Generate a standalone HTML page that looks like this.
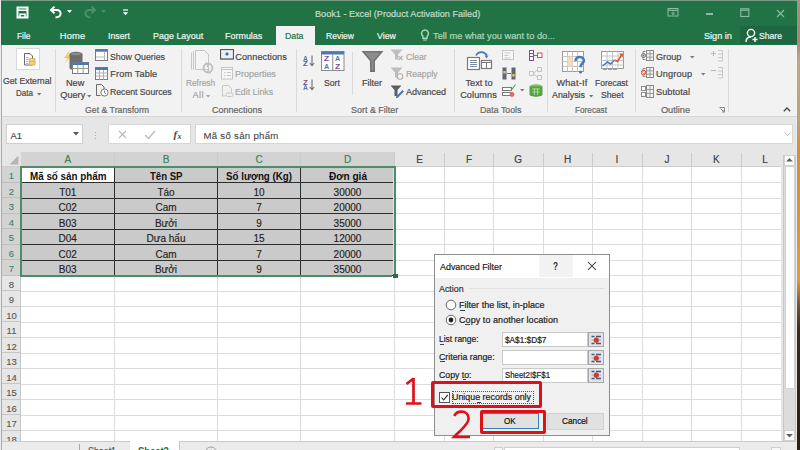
<!DOCTYPE html><html><head><meta charset="utf-8"><style>
html,body{margin:0;padding:0;width:800px;height:450px;overflow:hidden;background:#f3f3f3}
body{position:relative;font-family:"Liberation Sans",sans-serif}
div,span,svg{position:absolute;box-sizing:border-box}
.t{white-space:pre;transform-origin:0 0}
</style></head><body>
<div style="left:0px;top:0px;width:800px;height:450px;background:#eaeaea;"></div>
<div style="left:797px;top:0px;width:3px;height:450px;background:linear-gradient(#a89088 0px,#a48676 40px,#c4a486 60px,#bfa080 120px,#d48e3c 150px,#e09a44 280px,#7a5430 305px,#3a2a20 330px,#2a1e18 450px)"></div>
<div style="left:1px;top:0px;width:796px;height:1px;background:#7a9c86;"></div>
<div style="left:1px;top:1px;width:796px;height:44px;background:#217346;"></div>
<svg style="left:16px;top:6px;" width="13" height="13" viewBox="0 0 13 13"><path d="M1.5 1.5h10v10h-10z" fill="none" stroke="#fff" stroke-width="2"/><path d="M2 4.2h9" stroke="#fff" stroke-width="1.6"/><path d="M4 11.5v-3.3h5v3.3" fill="none" stroke="#fff" stroke-width="1.6"/></svg>
<svg style="left:49px;top:5px;" width="14" height="14" viewBox="0 0 14 14"><path d="M2.5 5h5.5a3.6 3.6 0 0 1 0 7.2h-1.5" fill="none" stroke="#fff" stroke-width="2"/><path d="M5.5 1.6L2 5l3.5 3.4" stroke="#fff" stroke-width="2" fill="none"/></svg>
<svg style="left:67px;top:10px;" width="6" height="4" viewBox="0 0 6 4"><path d="M0 0h5l-2.5 3z" fill="#fff"/></svg>
<svg style="left:83px;top:5px;" width="14" height="14" viewBox="0 0 14 14"><path d="M11.5 5h-5.5a3.6 3.6 0 0 0 0 7.2h1.5" fill="none" stroke="#4f8f6a" stroke-width="2"/><path d="M8.5 1.6L12 5l-3.5 3.4" stroke="#4f8f6a" stroke-width="2" fill="none"/></svg>
<svg style="left:101px;top:10px;" width="6" height="4" viewBox="0 0 6 4"><path d="M0 0h5l-2.5 3z" fill="#4f8f6a"/></svg>
<svg style="left:122px;top:9px;" width="7" height="7" viewBox="0 0 7 7"><path d="M1 1h5" stroke="#fff" stroke-width="1.2"/><path d="M0.8 3.2h5.4l-2.7 3z" fill="#fff"/></svg>
<span class="t" style="left:314.95px;top:10.26px;font-size:9.2px;line-height:9.2px;color:#c4dccc;transform:scaleX(0.9928);-webkit-text-stroke:0.2px #c4dccc;">Book1 - Excel (Product Activation Failed)</span>
<svg style="left:667px;top:7px;" width="12" height="10" viewBox="0 0 12 10"><rect x="1" y="1.5" width="10" height="7.5" fill="none" stroke="#8dbb9f" stroke-width="1"/><path d="M1 3.3h10" stroke="#8dbb9f" stroke-width="1.2"/><path d="M6 4.5v3M4.3 5.8L6 7.6l1.7-1.8" stroke="#8dbb9f" fill="none"/></svg>
<div style="left:705.5px;top:13.3px;width:7px;height:1.3px;background:#8dbb9f;"></div>
<svg style="left:740px;top:7.5px;" width="10" height="10" viewBox="0 0 10 10"><rect x="0.8" y="0.8" width="8" height="7.7" fill="none" stroke="#8dbb9f" stroke-width="1.1"/><path d="M0.8 2.2h8" stroke="#8dbb9f" stroke-width="1.2"/></svg>
<svg style="left:775.5px;top:8.5px;" width="9" height="9" viewBox="0 0 9 9"><path d="M1 1l7 7M8 1l-7 7" stroke="#8dbb9f" stroke-width="1.2"/></svg>
<div style="left:276px;top:26px;width:39px;height:19px;background:#f2f2f2;"></div>
<span class="t" style="left:16.94px;top:31.39px;font-size:9.4px;line-height:9.4px;color:#eef6f1;transform:scaleX(0.8913);-webkit-text-stroke:0.2px #eef6f1;">File</span>
<span class="t" style="left:59.84px;top:31.39px;font-size:9.4px;line-height:9.4px;color:#eef6f1;letter-spacing:0.108px;-webkit-text-stroke:0.2px #eef6f1;">Home</span>
<span class="t" style="left:108.04px;top:31.39px;font-size:9.4px;line-height:9.4px;color:#eef6f1;transform:scaleX(0.9315);-webkit-text-stroke:0.2px #eef6f1;">Insert</span>
<span class="t" style="left:152.74px;top:31.39px;font-size:9.4px;line-height:9.4px;color:#eef6f1;transform:scaleX(0.9547);-webkit-text-stroke:0.2px #eef6f1;">Page Layout</span>
<span class="t" style="left:225.24px;top:31.39px;font-size:9.4px;line-height:9.4px;color:#eef6f1;transform:scaleX(0.9547);-webkit-text-stroke:0.2px #eef6f1;">Formulas</span>
<span class="t" style="left:326.44px;top:31.39px;font-size:9.4px;line-height:9.4px;color:#eef6f1;transform:scaleX(0.9085);-webkit-text-stroke:0.2px #eef6f1;">Review</span>
<span class="t" style="left:377.44px;top:31.39px;font-size:9.4px;line-height:9.4px;color:#eef6f1;transform:scaleX(0.9403);-webkit-text-stroke:0.2px #eef6f1;">View</span>
<span class="t" style="left:285.44px;top:31.39px;font-size:9.4px;line-height:9.4px;color:#217346;transform:scaleX(0.9317);-webkit-text-stroke:0.2px #217346;">Data</span>
<svg style="left:420px;top:29px;" width="10" height="12" viewBox="0 0 10 12"><path d="M5 1a3.4 3.4 0 0 0-2.1 6.1v2.2h4.2v-2.2A3.4 3.4 0 0 0 5 1z" fill="none" stroke="#a8d4b8" stroke-width="1.4"/><path d="M3.2 11h3.6" stroke="#a8d4b8" stroke-width="1.2"/></svg>
<span class="t" style="left:433.19px;top:31.39px;font-size:9.4px;line-height:9.4px;color:#b0d6bd;transform:scaleX(0.9872);-webkit-text-stroke:0.2px #b0d6bd;">Tell me what you want to do...</span>
<span class="t" style="left:703.84px;top:31.39px;font-size:9.4px;line-height:9.4px;color:#eef6f1;transform:scaleX(0.9742);-webkit-text-stroke:0.2px #eef6f1;">Sign in</span>
<div style="left:740px;top:26px;width:57px;height:18px;background:#1d6840;"></div>
<svg style="left:745px;top:28px;" width="14" height="15" viewBox="0 0 14 15"><circle cx="6" cy="5" r="3.6" fill="none" stroke="#fff" stroke-width="1.4"/><path d="M1 14c0-3 2-5 5-5" fill="none" stroke="#fff" stroke-width="1.4"/><path d="M10 9v5M7.5 11.5h5" stroke="#fff" stroke-width="1.4"/></svg>
<span class="t" style="left:759.44px;top:31.39px;font-size:9.4px;line-height:9.4px;color:#eef6f1;transform:scaleX(0.9169);-webkit-text-stroke:0.2px #eef6f1;">Share</span>
<div style="left:1px;top:45px;width:796px;height:71px;background:#f2f2f2;"></div>
<div style="left:1px;top:116px;width:796px;height:1px;background:#d6d6d6;"></div>
<div style="left:55px;top:49px;width:1px;height:63px;background:#dadada;"></div>
<div style="left:181px;top:49px;width:1px;height:63px;background:#dadada;"></div>
<div style="left:296px;top:49px;width:1px;height:63px;background:#dadada;"></div>
<div style="left:352px;top:52px;width:1px;height:43px;background:#dadada;"></div>
<div style="left:454px;top:49px;width:1px;height:63px;background:#dadada;"></div>
<div style="left:547px;top:49px;width:1px;height:63px;background:#dadada;"></div>
<div style="left:635px;top:49px;width:1px;height:63px;background:#dadada;"></div>
<div style="left:728px;top:49px;width:1px;height:63px;background:#dadada;"></div>
<span class="t" style="left:3.45px;top:76.96px;font-size:9.2px;line-height:9.2px;color:#484848;transform:scaleX(0.9485);-webkit-text-stroke:0.2px #484848;">Get External</span>
<span class="t" style="left:16.45px;top:89.06px;font-size:9.2px;line-height:9.2px;color:#484848;transform:scaleX(0.8748);-webkit-text-stroke:0.2px #484848;">Data</span>
<span class="t" style="left:66.15px;top:79.16px;font-size:9.2px;line-height:9.2px;color:#484848;transform:scaleX(0.9943);-webkit-text-stroke:0.2px #484848;">New</span>
<span class="t" style="left:60.25px;top:90.96px;font-size:9.2px;line-height:9.2px;color:#484848;-webkit-text-stroke:0.2px #484848;">Query</span>
<span class="t" style="left:110.25px;top:52.66px;font-size:9.2px;line-height:9.2px;color:#484848;transform:scaleX(0.9518);-webkit-text-stroke:0.2px #484848;">Show Queries</span>
<span class="t" style="left:110.25px;top:70.26px;font-size:9.2px;line-height:9.2px;color:#484848;letter-spacing:0.128px;-webkit-text-stroke:0.2px #484848;">From Table</span>
<span class="t" style="left:110.25px;top:88.16px;font-size:9.2px;line-height:9.2px;color:#484848;transform:scaleX(0.9426);-webkit-text-stroke:0.2px #484848;">Recent Sources</span>
<span class="t" style="left:85.25px;top:106.16px;font-size:9.2px;line-height:9.2px;color:#666666;transform:scaleX(0.9513);-webkit-text-stroke:0.2px #666666;">Get &amp; Transform</span>
<span class="t" style="left:186.15px;top:79.16px;font-size:9.2px;line-height:9.2px;color:#a6a6a6;transform:scaleX(0.9033);-webkit-text-stroke:0.2px #a6a6a6;">Refresh</span>
<span class="t" style="left:192.45px;top:91.16px;font-size:9.2px;line-height:9.2px;color:#a6a6a6;letter-spacing:0.388px;-webkit-text-stroke:0.2px #a6a6a6;">All</span>
<span class="t" style="left:235.25px;top:52.66px;font-size:9.2px;line-height:9.2px;color:#484848;letter-spacing:0.056px;-webkit-text-stroke:0.2px #484848;">Connections</span>
<span class="t" style="left:235.25px;top:70.06px;font-size:9.2px;line-height:9.2px;color:#a6a6a6;transform:scaleX(0.9754);-webkit-text-stroke:0.2px #a6a6a6;">Properties</span>
<span class="t" style="left:235.25px;top:88.16px;font-size:9.2px;line-height:9.2px;color:#a6a6a6;transform:scaleX(0.9577);-webkit-text-stroke:0.2px #a6a6a6;">Edit Links</span>
<span class="t" style="left:212.45px;top:106.16px;font-size:9.2px;line-height:9.2px;color:#666666;transform:scaleX(0.9776);-webkit-text-stroke:0.2px #666666;">Connections</span>
<span class="t" style="left:324.45px;top:79.16px;font-size:9.2px;line-height:9.2px;color:#484848;transform:scaleX(0.9364);-webkit-text-stroke:0.2px #484848;">Sort</span>
<span class="t" style="left:362.05px;top:79.16px;font-size:9.2px;line-height:9.2px;color:#484848;transform:scaleX(0.9782);-webkit-text-stroke:0.2px #484848;">Filter</span>
<span class="t" style="left:405.75px;top:52.66px;font-size:9.2px;line-height:9.2px;color:#a6a6a6;transform:scaleX(0.9415);-webkit-text-stroke:0.2px #a6a6a6;">Clear</span>
<span class="t" style="left:405.75px;top:70.26px;font-size:9.2px;line-height:9.2px;color:#a6a6a6;transform:scaleX(0.9391);-webkit-text-stroke:0.2px #a6a6a6;">Reapply</span>
<span class="t" style="left:405.75px;top:88.16px;font-size:9.2px;line-height:9.2px;color:#484848;transform:scaleX(0.9824);-webkit-text-stroke:0.2px #484848;">Advanced</span>
<span class="t" style="left:351.15px;top:106.16px;font-size:9.2px;line-height:9.2px;color:#666666;transform:scaleX(0.9739);-webkit-text-stroke:0.2px #666666;">Sort &amp; Filter</span>
<span class="t" style="left:465.45px;top:79.16px;font-size:9.2px;line-height:9.2px;color:#484848;-webkit-text-stroke:0.2px #484848;">Text to</span>
<span class="t" style="left:460.15px;top:90.96px;font-size:9.2px;line-height:9.2px;color:#484848;letter-spacing:0.083px;-webkit-text-stroke:0.2px #484848;">Columns</span>
<span class="t" style="left:480.45px;top:106.16px;font-size:9.2px;line-height:9.2px;color:#666666;transform:scaleX(0.9584);-webkit-text-stroke:0.2px #666666;">Data Tools</span>
<span class="t" style="left:556.45px;top:79.16px;font-size:9.2px;line-height:9.2px;color:#484848;letter-spacing:0.192px;-webkit-text-stroke:0.2px #484848;">What-If</span>
<span class="t" style="left:552.45px;top:90.96px;font-size:9.2px;line-height:9.2px;color:#484848;transform:scaleX(0.9633);-webkit-text-stroke:0.2px #484848;">Analysis</span>
<span class="t" style="left:595.45px;top:79.16px;font-size:9.2px;line-height:9.2px;color:#484848;transform:scaleX(0.9220);-webkit-text-stroke:0.2px #484848;">Forecast</span>
<span class="t" style="left:601.45px;top:90.96px;font-size:9.2px;line-height:9.2px;color:#484848;transform:scaleX(0.9400);-webkit-text-stroke:0.2px #484848;">Sheet</span>
<span class="t" style="left:575.45px;top:106.16px;font-size:9.2px;line-height:9.2px;color:#666666;transform:scaleX(0.8941);-webkit-text-stroke:0.2px #666666;">Forecast</span>
<span class="t" style="left:656.05px;top:52.66px;font-size:9.2px;line-height:9.2px;color:#484848;transform:scaleX(0.9933);-webkit-text-stroke:0.2px #484848;">Group</span>
<span class="t" style="left:656.05px;top:70.26px;font-size:9.2px;line-height:9.2px;color:#484848;letter-spacing:0.151px;-webkit-text-stroke:0.2px #484848;">Ungroup</span>
<span class="t" style="left:656.05px;top:88.16px;font-size:9.2px;line-height:9.2px;color:#484848;letter-spacing:0.034px;-webkit-text-stroke:0.2px #484848;">Subtotal</span>
<span class="t" style="left:660.95px;top:106.16px;font-size:9.2px;line-height:9.2px;color:#666666;-webkit-text-stroke:0.2px #666666;">Outline</span>
<svg style="left:37.3px;top:93.3px;" width="5" height="3" viewBox="0 0 5 3"><path d="M0 0h4.4l-2.2 2.5z" fill="#777"/></svg>
<svg style="left:87.3px;top:95.3px;" width="5" height="3" viewBox="0 0 5 3"><path d="M0 0h4.4l-2.2 2.5z" fill="#777"/></svg>
<svg style="left:205.8px;top:95.3px;" width="5" height="3" viewBox="0 0 5 3"><path d="M0 0h4.4l-2.2 2.5z" fill="#a6a6a6"/></svg>
<svg style="left:589.3px;top:95.3px;" width="5" height="3" viewBox="0 0 5 3"><path d="M0 0h4.4l-2.2 2.5z" fill="#777"/></svg>
<svg style="left:690.3px;top:56.3px;" width="5" height="3" viewBox="0 0 5 3"><path d="M0 0h4.4l-2.2 2.5z" fill="#777"/></svg>
<svg style="left:701.3px;top:73.3px;" width="5" height="3" viewBox="0 0 5 3"><path d="M0 0h4.4l-2.2 2.5z" fill="#777"/></svg>
<svg style="left:520.3px;top:89.3px;" width="5" height="3" viewBox="0 0 5 3"><path d="M0 0h4.4l-2.2 2.5z" fill="#777"/></svg>
<div style="left:1px;top:117px;width:795px;height:35px;background:#e6e6e6;"></div>
<div style="left:6px;top:124px;width:77px;height:20px;background:#ffffff;box-shadow:inset 0 0 0 1px #cfcfcf;"></div>
<span class="t" style="left:10.44px;top:131.09px;font-size:9.4px;line-height:9.4px;color:#444;-webkit-text-stroke:0.15px #444;">A1</span>
<svg style="left:73px;top:132px;" width="6" height="4" viewBox="0 0 6 4"><path d="M0 0h6l-3 3.5z" fill="#555"/></svg>
<div style="left:95.2px;top:131.5px;width:1.2px;height:1.2px;background:#b0b0b0;"></div>
<div style="left:95.2px;top:134.5px;width:1.2px;height:1.2px;background:#b0b0b0;"></div>
<div style="left:95.2px;top:137.5px;width:1.2px;height:1.2px;background:#b0b0b0;"></div>
<div style="left:108px;top:124px;width:83px;height:20px;background:#ffffff;box-shadow:inset 0 0 0 1px #d6d6d6;"></div>
<svg style="left:118px;top:130px;" width="9" height="9" viewBox="0 0 9 9"><path d="M1 1l7 7M8 1l-7 7" stroke="#b8b8b8" stroke-width="1.1"/></svg>
<svg style="left:144px;top:130px;" width="12" height="9" viewBox="0 0 12 9"><path d="M1 5l3.5 3.5L11 1" stroke="#b8b8b8" stroke-width="1.2" fill="none"/></svg>
<span class="t" style="left:173.5px;top:128.5px;font:italic bold 11px/11px 'Liberation Serif';color:#4a4a4a">f<span style="position:relative;top:1.5px;font-size:8px;margin-left:0.3px">x</span></span>
<div style="left:195px;top:124px;width:598px;height:20px;background:#ffffff;box-shadow:inset 0 0 0 1px #d6d6d6;"></div>
<span class="t" style="left:203.42px;top:130.72px;font-size:9.6px;line-height:9.6px;color:#444;letter-spacing:0.310px;-webkit-text-stroke:0.1px #444;">Mã số sản phẩm</span>
<svg style="left:784px;top:132px;" width="7" height="4" viewBox="0 0 7 4"><path d="M0.5 0.5l3 3 3-3" stroke="#bdbdbd" fill="none"/></svg>
<div style="left:2px;top:152px;width:779px;height:15px;background:#e6e6e6;"></div>
<div style="left:21px;top:152px;width:373.5px;height:15px;background:#d3d3d3;"></div>
<div style="left:2px;top:152px;width:19px;height:15px;background:#e6e6e6;"></div>
<svg style="left:9px;top:155px;" width="10" height="10" viewBox="0 0 10 10"><path d="M9.5 0.5v9h-9z" fill="#b5b5b5"/></svg>
<div style="left:21px;top:167px;width:760px;height:274px;background:#ffffff;"></div>
<div style="left:2px;top:167px;width:19px;height:274px;background:#e6e6e6;"></div>
<div style="left:2px;top:167px;width:19px;height:108.5px;background:#d3d3d3;"></div>
<div style="left:2px;top:181.5px;width:19px;height:1px;background:#bfbfbf;"></div>
<span class="t" style="left:8.86px;top:171.31px;font-size:9.5px;line-height:9.5px;color:#3f7f5a;-webkit-text-stroke:0.1px #3f7f5a;">1</span>
<div style="left:2px;top:197.0px;width:19px;height:1px;background:#bfbfbf;"></div>
<span class="t" style="left:8.86px;top:186.81px;font-size:9.5px;line-height:9.5px;color:#3f7f5a;-webkit-text-stroke:0.1px #3f7f5a;">2</span>
<div style="left:2px;top:212.5px;width:19px;height:1px;background:#bfbfbf;"></div>
<span class="t" style="left:8.86px;top:202.31px;font-size:9.5px;line-height:9.5px;color:#3f7f5a;-webkit-text-stroke:0.1px #3f7f5a;">3</span>
<div style="left:2px;top:228.0px;width:19px;height:1px;background:#bfbfbf;"></div>
<span class="t" style="left:8.86px;top:217.81px;font-size:9.5px;line-height:9.5px;color:#3f7f5a;-webkit-text-stroke:0.1px #3f7f5a;">4</span>
<div style="left:2px;top:243.5px;width:19px;height:1px;background:#bfbfbf;"></div>
<span class="t" style="left:8.86px;top:233.31px;font-size:9.5px;line-height:9.5px;color:#3f7f5a;-webkit-text-stroke:0.1px #3f7f5a;">5</span>
<div style="left:2px;top:259.0px;width:19px;height:1px;background:#bfbfbf;"></div>
<span class="t" style="left:8.86px;top:248.81px;font-size:9.5px;line-height:9.5px;color:#3f7f5a;-webkit-text-stroke:0.1px #3f7f5a;">6</span>
<div style="left:2px;top:274.5px;width:19px;height:1px;background:#bfbfbf;"></div>
<span class="t" style="left:8.86px;top:264.31px;font-size:9.5px;line-height:9.5px;color:#3f7f5a;-webkit-text-stroke:0.1px #3f7f5a;">7</span>
<div style="left:2px;top:290.0px;width:19px;height:1px;background:#c6c6c6;"></div>
<span class="t" style="left:8.86px;top:279.81px;font-size:9.5px;line-height:9.5px;color:#555;-webkit-text-stroke:0.1px #555;">8</span>
<div style="left:2px;top:305.5px;width:19px;height:1px;background:#c6c6c6;"></div>
<span class="t" style="left:8.86px;top:295.31px;font-size:9.5px;line-height:9.5px;color:#555;-webkit-text-stroke:0.1px #555;">9</span>
<div style="left:2px;top:321.0px;width:19px;height:1px;background:#c6c6c6;"></div>
<span class="t" style="left:6.22px;top:310.81px;font-size:9.5px;line-height:9.5px;color:#555;-webkit-text-stroke:0.1px #555;">10</span>
<div style="left:2px;top:336.5px;width:19px;height:1px;background:#c6c6c6;"></div>
<span class="t" style="left:6.57px;top:326.31px;font-size:9.5px;line-height:9.5px;color:#555;-webkit-text-stroke:0.1px #555;">11</span>
<div style="left:2px;top:352.0px;width:19px;height:1px;background:#c6c6c6;"></div>
<span class="t" style="left:6.22px;top:341.81px;font-size:9.5px;line-height:9.5px;color:#555;-webkit-text-stroke:0.1px #555;">12</span>
<div style="left:2px;top:367.5px;width:19px;height:1px;background:#c6c6c6;"></div>
<span class="t" style="left:6.22px;top:357.31px;font-size:9.5px;line-height:9.5px;color:#555;-webkit-text-stroke:0.1px #555;">13</span>
<div style="left:2px;top:383.0px;width:19px;height:1px;background:#c6c6c6;"></div>
<span class="t" style="left:6.22px;top:372.81px;font-size:9.5px;line-height:9.5px;color:#555;-webkit-text-stroke:0.1px #555;">14</span>
<div style="left:2px;top:398.5px;width:19px;height:1px;background:#c6c6c6;"></div>
<span class="t" style="left:6.22px;top:388.31px;font-size:9.5px;line-height:9.5px;color:#555;-webkit-text-stroke:0.1px #555;">15</span>
<div style="left:2px;top:414.0px;width:19px;height:1px;background:#c6c6c6;"></div>
<span class="t" style="left:6.22px;top:403.81px;font-size:9.5px;line-height:9.5px;color:#555;-webkit-text-stroke:0.1px #555;">16</span>
<div style="left:2px;top:429.5px;width:19px;height:1px;background:#c6c6c6;"></div>
<span class="t" style="left:6.22px;top:419.31px;font-size:9.5px;line-height:9.5px;color:#555;-webkit-text-stroke:0.1px #555;">17</span>
<div style="left:2px;top:445.0px;width:19px;height:1px;background:#c6c6c6;"></div>
<span class="t" style="left:6.22px;top:434.81px;font-size:9.5px;line-height:9.5px;color:#555;-webkit-text-stroke:0.1px #555;">18</span>
<div style="left:20px;top:167px;width:1px;height:274px;background:#c8c8c8;"></div>
<div style="left:114.0px;top:153px;width:1px;height:14px;background:#cbcbcb;"></div>
<span class="t" style="left:64.41px;top:155.48px;font-size:10px;line-height:10px;color:#3f7f5a;-webkit-text-stroke:0.2px #3f7f5a;">A</span>
<div style="left:217.0px;top:153px;width:1px;height:14px;background:#cbcbcb;"></div>
<span class="t" style="left:162.66px;top:155.48px;font-size:10px;line-height:10px;color:#3f7f5a;-webkit-text-stroke:0.2px #3f7f5a;">B</span>
<div style="left:300.0px;top:153px;width:1px;height:14px;background:#cbcbcb;"></div>
<span class="t" style="left:255.39px;top:155.48px;font-size:10px;line-height:10px;color:#3f7f5a;-webkit-text-stroke:0.2px #3f7f5a;">C</span>
<div style="left:394.0px;top:153px;width:1px;height:14px;background:#cbcbcb;"></div>
<span class="t" style="left:343.89px;top:155.48px;font-size:10px;line-height:10px;color:#3f7f5a;-webkit-text-stroke:0.2px #3f7f5a;">D</span>
<div style="left:444.0px;top:153px;width:1px;height:14px;background:#cbcbcb;"></div>
<span class="t" style="left:416.16px;top:155.48px;font-size:10px;line-height:10px;color:#444;-webkit-text-stroke:0.2px #444;">E</span>
<div style="left:493.0px;top:153px;width:1px;height:14px;background:#cbcbcb;"></div>
<span class="t" style="left:465.95px;top:155.48px;font-size:10px;line-height:10px;color:#444;-webkit-text-stroke:0.2px #444;">F</span>
<div style="left:542.5px;top:153px;width:1px;height:14px;background:#cbcbcb;"></div>
<span class="t" style="left:514.36px;top:155.48px;font-size:10px;line-height:10px;color:#444;-webkit-text-stroke:0.2px #444;">G</span>
<div style="left:591.5px;top:153px;width:1px;height:14px;background:#cbcbcb;"></div>
<span class="t" style="left:563.89px;top:155.48px;font-size:10px;line-height:10px;color:#444;-webkit-text-stroke:0.2px #444;">H</span>
<div style="left:641.5px;top:153px;width:1px;height:14px;background:#cbcbcb;"></div>
<span class="t" style="left:615.61px;top:155.48px;font-size:10px;line-height:10px;color:#444;-webkit-text-stroke:0.2px #444;">I</span>
<div style="left:691.3px;top:153px;width:1px;height:14px;background:#cbcbcb;"></div>
<span class="t" style="left:664.40px;top:155.48px;font-size:10px;line-height:10px;color:#444;-webkit-text-stroke:0.2px #444;">J</span>
<div style="left:740.5px;top:153px;width:1px;height:14px;background:#cbcbcb;"></div>
<span class="t" style="left:713.06px;top:155.48px;font-size:10px;line-height:10px;color:#444;-webkit-text-stroke:0.2px #444;">K</span>
<div style="left:780.5px;top:153px;width:1px;height:14px;background:#cbcbcb;"></div>
<span class="t" style="left:762.22px;top:155.48px;font-size:10px;line-height:10px;color:#444;-webkit-text-stroke:0.2px #444;">L</span>
<div style="left:2px;top:166px;width:779px;height:1px;background:#cdcdcd;"></div>
<div style="left:21px;top:182.0px;width:760px;height:1px;background:#dcdcdc;"></div>
<div style="left:21px;top:197.5px;width:760px;height:1px;background:#dcdcdc;"></div>
<div style="left:21px;top:213.0px;width:760px;height:1px;background:#dcdcdc;"></div>
<div style="left:21px;top:228.5px;width:760px;height:1px;background:#dcdcdc;"></div>
<div style="left:21px;top:244.0px;width:760px;height:1px;background:#dcdcdc;"></div>
<div style="left:21px;top:259.5px;width:760px;height:1px;background:#dcdcdc;"></div>
<div style="left:21px;top:275.0px;width:760px;height:1px;background:#dcdcdc;"></div>
<div style="left:21px;top:290.5px;width:760px;height:1px;background:#dcdcdc;"></div>
<div style="left:21px;top:306.0px;width:760px;height:1px;background:#dcdcdc;"></div>
<div style="left:21px;top:321.5px;width:760px;height:1px;background:#dcdcdc;"></div>
<div style="left:21px;top:337.0px;width:760px;height:1px;background:#dcdcdc;"></div>
<div style="left:21px;top:352.5px;width:760px;height:1px;background:#dcdcdc;"></div>
<div style="left:21px;top:368.0px;width:760px;height:1px;background:#dcdcdc;"></div>
<div style="left:21px;top:383.5px;width:760px;height:1px;background:#dcdcdc;"></div>
<div style="left:21px;top:399.0px;width:760px;height:1px;background:#dcdcdc;"></div>
<div style="left:21px;top:414.5px;width:760px;height:1px;background:#dcdcdc;"></div>
<div style="left:21px;top:430.0px;width:760px;height:1px;background:#dcdcdc;"></div>
<div style="left:114.0px;top:167px;width:1px;height:274px;background:#dcdcdc;"></div>
<div style="left:217.0px;top:167px;width:1px;height:274px;background:#dcdcdc;"></div>
<div style="left:300.0px;top:167px;width:1px;height:274px;background:#dcdcdc;"></div>
<div style="left:394.0px;top:167px;width:1px;height:274px;background:#dcdcdc;"></div>
<div style="left:444.0px;top:167px;width:1px;height:274px;background:#dcdcdc;"></div>
<div style="left:493.0px;top:167px;width:1px;height:274px;background:#dcdcdc;"></div>
<div style="left:542.5px;top:167px;width:1px;height:274px;background:#dcdcdc;"></div>
<div style="left:591.5px;top:167px;width:1px;height:274px;background:#dcdcdc;"></div>
<div style="left:641.5px;top:167px;width:1px;height:274px;background:#dcdcdc;"></div>
<div style="left:691.3px;top:167px;width:1px;height:274px;background:#dcdcdc;"></div>
<div style="left:740.5px;top:167px;width:1px;height:274px;background:#dcdcdc;"></div>
<div style="left:780.5px;top:167px;width:1px;height:274px;background:#dcdcdc;"></div>
<div style="left:21px;top:167px;width:373.5px;height:108.5px;background:#cbcaca;"></div>
<div style="left:21px;top:167px;width:93.5px;height:15.5px;background:#ffffff;"></div>
<div style="left:21px;top:166.5px;width:372px;height:1.2px;background:#2e2e2e;"></div>
<div style="left:21px;top:182.0px;width:372px;height:1.2px;background:#2e2e2e;"></div>
<div style="left:21px;top:197.5px;width:372px;height:1.2px;background:#2e2e2e;"></div>
<div style="left:21px;top:213.0px;width:372px;height:1.2px;background:#2e2e2e;"></div>
<div style="left:21px;top:228.5px;width:372px;height:1.2px;background:#2e2e2e;"></div>
<div style="left:21px;top:244.0px;width:372px;height:1.2px;background:#2e2e2e;"></div>
<div style="left:21px;top:259.5px;width:372px;height:1.2px;background:#2e2e2e;"></div>
<div style="left:21px;top:275.0px;width:372px;height:1.2px;background:#2e2e2e;"></div>
<div style="left:20.5px;top:167px;width:1.2px;height:108.5px;background:#2e2e2e;"></div>
<div style="left:114.0px;top:167px;width:1.2px;height:108.5px;background:#2e2e2e;"></div>
<div style="left:217.0px;top:167px;width:1.2px;height:108.5px;background:#2e2e2e;"></div>
<div style="left:300.0px;top:167px;width:1.2px;height:108.5px;background:#2e2e2e;"></div>
<div style="left:393px;top:167px;width:1px;height:108.5px;background:#e4e4e4;"></div>
<span class="t" style="left:29.50px;top:171.36px;font-size:10.5px;line-height:10.5px;color:#111;font-weight:bold;transform:scaleX(0.9365);">Mã số sản phẩm</span>
<span class="t" style="left:149.75px;top:171.36px;font-size:10.5px;line-height:10.5px;color:#111;font-weight:bold;transform:scaleX(0.9131);">Tên SP</span>
<span class="t" style="left:226.00px;top:171.36px;font-size:10.5px;line-height:10.5px;color:#111;font-weight:bold;transform:scaleX(0.9288);">Số lượng (Kg)</span>
<span class="t" style="left:328.50px;top:171.36px;font-size:10.5px;line-height:10.5px;color:#111;font-weight:bold;transform:scaleX(0.9608);">Đơn giá</span>
<span class="t" style="left:59.13px;top:187.88px;font-size:10px;line-height:10px;color:#222;-webkit-text-stroke:0.15px #222;">T01</span>
<span class="t" style="left:157.38px;top:187.88px;font-size:10px;line-height:10px;color:#222;-webkit-text-stroke:0.15px #222;">Táo</span>
<span class="t" style="left:253.44px;top:187.88px;font-size:10px;line-height:10px;color:#222;-webkit-text-stroke:0.15px #222;">10</span>
<span class="t" style="left:333.60px;top:187.88px;font-size:10px;line-height:10px;color:#222;-webkit-text-stroke:0.15px #222;">30000</span>
<span class="t" style="left:58.58px;top:203.38px;font-size:10px;line-height:10px;color:#222;-webkit-text-stroke:0.15px #222;">C02</span>
<span class="t" style="left:155.44px;top:203.38px;font-size:10px;line-height:10px;color:#222;-webkit-text-stroke:0.15px #222;">Cam</span>
<span class="t" style="left:256.22px;top:203.38px;font-size:10px;line-height:10px;color:#222;-webkit-text-stroke:0.15px #222;">7</span>
<span class="t" style="left:333.60px;top:203.38px;font-size:10px;line-height:10px;color:#222;-webkit-text-stroke:0.15px #222;">20000</span>
<span class="t" style="left:58.85px;top:218.88px;font-size:10px;line-height:10px;color:#222;-webkit-text-stroke:0.15px #222;">B03</span>
<span class="t" style="left:154.93px;top:218.88px;font-size:10px;line-height:10px;color:#222;-webkit-text-stroke:0.15px #222;">Bưởi</span>
<span class="t" style="left:256.22px;top:218.88px;font-size:10px;line-height:10px;color:#222;-webkit-text-stroke:0.15px #222;">9</span>
<span class="t" style="left:333.60px;top:218.88px;font-size:10px;line-height:10px;color:#222;-webkit-text-stroke:0.15px #222;">35000</span>
<span class="t" style="left:58.58px;top:234.38px;font-size:10px;line-height:10px;color:#222;-webkit-text-stroke:0.15px #222;">D04</span>
<span class="t" style="left:146.53px;top:234.38px;font-size:10px;line-height:10px;color:#222;-webkit-text-stroke:0.15px #222;">Dưa hấu</span>
<span class="t" style="left:253.44px;top:234.38px;font-size:10px;line-height:10px;color:#222;-webkit-text-stroke:0.15px #222;">15</span>
<span class="t" style="left:333.60px;top:234.38px;font-size:10px;line-height:10px;color:#222;-webkit-text-stroke:0.15px #222;">12000</span>
<span class="t" style="left:58.58px;top:249.88px;font-size:10px;line-height:10px;color:#222;-webkit-text-stroke:0.15px #222;">C02</span>
<span class="t" style="left:155.44px;top:249.88px;font-size:10px;line-height:10px;color:#222;-webkit-text-stroke:0.15px #222;">Cam</span>
<span class="t" style="left:256.22px;top:249.88px;font-size:10px;line-height:10px;color:#222;-webkit-text-stroke:0.15px #222;">7</span>
<span class="t" style="left:333.60px;top:249.88px;font-size:10px;line-height:10px;color:#222;-webkit-text-stroke:0.15px #222;">20000</span>
<span class="t" style="left:58.85px;top:265.38px;font-size:10px;line-height:10px;color:#222;-webkit-text-stroke:0.15px #222;">B03</span>
<span class="t" style="left:154.93px;top:265.38px;font-size:10px;line-height:10px;color:#222;-webkit-text-stroke:0.15px #222;">Bưởi</span>
<span class="t" style="left:256.22px;top:265.38px;font-size:10px;line-height:10px;color:#222;-webkit-text-stroke:0.15px #222;">9</span>
<span class="t" style="left:333.60px;top:265.38px;font-size:10px;line-height:10px;color:#222;-webkit-text-stroke:0.15px #222;">35000</span>
<div style="left:20px;top:166px;width:376px;height:2px;background:#4c8c68;"></div>
<div style="left:20px;top:166px;width:2px;height:110.5px;background:#4c8c68;"></div>
<div style="left:394px;top:166px;width:2px;height:108px;background:#4c8c68;"></div>
<div style="left:20px;top:275px;width:372px;height:2px;background:#4c8c68;"></div>
<div style="left:392.5px;top:274px;width:5px;height:4px;background:#2e6a4a;"></div>
<div style="left:781px;top:152px;width:15px;height:289px;background:#e6e6e6;"></div>
<div style="left:783px;top:155px;width:13px;height:286px;background:#dcdcdc;box-shadow:inset 0 0 0 1px #c8c8c8;"></div>
<div style="left:784px;top:155px;width:11px;height:10.5px;background:#ffffff;box-shadow:inset 0 0 0 1px #d0d0d0;"></div>
<svg style="left:786px;top:158px;" width="7" height="4" viewBox="0 0 7 4"><path d="M0 3.5h7l-3.5-3.5z" fill="#606060"/></svg>
<div style="left:785px;top:166px;width:10px;height:223px;background:#ffffff;box-shadow:inset 0 0 0 1px #d4d4d4;"></div>
<div style="left:784px;top:430px;width:11px;height:11px;background:#ffffff;box-shadow:inset 0 0 0 1px #d0d0d0;"></div>
<svg style="left:786px;top:434px;" width="7" height="4" viewBox="0 0 7 4"><path d="M0 0h7l-3.5 3.5z" fill="#606060"/></svg>
<div style="left:1px;top:441px;width:795px;height:9px;background:#ebebeb;"></div>
<div style="left:1px;top:441px;width:795px;height:1px;background:#cbcbcb;"></div>
<div style="left:79px;top:444px;width:1px;height:6px;background:#a8a8a8;"></div>
<div style="left:129.5px;top:441px;width:1px;height:9px;background:#c8c8c8;"></div>
<span class="t" style="left:88.40px;top:447.49px;font-size:10px;line-height:10px;color:#555;transform:scaleX(0.8834);-webkit-text-stroke:0.2px #555;">Sheet1</span>
<div style="left:130px;top:441px;width:48.5px;height:9px;background:#ffffff;"></div>
<div style="left:178.5px;top:441px;width:1px;height:9px;background:#c8c8c8;"></div>
<span class="t" style="left:138.10px;top:446.99px;font-size:10px;line-height:10px;color:#217346;font-weight:bold;transform:scaleX(0.9392);">Sheet2</span>
<svg style="left:204px;top:446px;" width="15" height="6" viewBox="0 0 15 6"><circle cx="7" cy="7" r="6" fill="none" stroke="#a0a0a0"/><path d="M7 3.5v5M4.5 6h5" stroke="#a0a0a0"/></svg>
<div style="left:494px;top:446.5px;width:9px;height:5px;background:#f7f7f7;box-shadow:inset 0 0 0 1px #cfcfcf;"></div>
<div style="left:504px;top:446.5px;width:236px;height:5px;background:#ffffff;box-shadow:inset 0 0 0 1px #cfcfcf;"></div>
<div style="left:771px;top:446.5px;width:10px;height:5px;background:#f7f7f7;box-shadow:inset 0 0 0 1px #cfcfcf;"></div>
<div style="left:433.5px;top:253.5px;width:176.29999999999995px;height:182.7px;background:#f0f0f0;box-shadow:inset 0 0 0 1px #8e8e8e;"></div>
<div style="left:434.5px;top:254.5px;width:174.29999999999995px;height:23px;background:#ffffff;"></div>
<div style="left:539px;top:255px;width:34px;height:21.5px;background:#f2f2f2;"></div>
<span class="t" style="left:440.42px;top:261.92px;font-size:9.6px;line-height:9.6px;color:#222;transform:scaleX(0.9295);-webkit-text-stroke:0.2px #222;">Advanced Filter</span>
<span class="t" style="left:553.34px;top:260.64px;font-size:11px;line-height:11px;color:#333;font-weight:bold;transform:scaleX(0.7441);">?</span>
<svg style="left:586.5px;top:260.5px;" width="10" height="10" viewBox="0 0 10 10"><path d="M1 1l8 8M9 1l-8 8" stroke="#2a2a2a" stroke-width="1.05"/></svg>
<span class="t" style="left:438.86px;top:285.03px;font-size:9px;line-height:9px;color:#333;transform:scaleX(0.9834);-webkit-text-stroke:0.2px #333;">Action</span>
<div style="left:469px;top:288px;width:135px;height:1px;background:#e0e0e0;"></div>
<svg style="left:445px;top:299px;" width="12" height="12" viewBox="0 0 12 12"><circle cx="6" cy="6" r="4.8" fill="#fff" stroke="#666" stroke-width="1"/></svg>
<svg style="left:445px;top:313.5px;" width="12" height="12" viewBox="0 0 12 12"><circle cx="6" cy="6" r="4.8" fill="#fff" stroke="#666" stroke-width="1"/><circle cx="6" cy="6" r="2.4" fill="#222"/></svg>
<span class="t" style="left:459.06px;top:301.23px;font-size:9px;line-height:9px;color:#222;letter-spacing:0.015px;-webkit-text-stroke:0.2px #222;">Filter the list, in-place</span>
<span class="t" style="left:459.06px;top:315.93px;font-size:9px;line-height:9px;color:#222;letter-spacing:0.058px;-webkit-text-stroke:0.2px #222;">Copy to another location</span>
<span class="t" style="left:438.86px;top:335.33px;font-size:9px;line-height:9px;color:#222;transform:scaleX(0.9423);-webkit-text-stroke:0.2px #222;">List range:</span>
<span class="t" style="left:438.86px;top:353.13px;font-size:9px;line-height:9px;color:#222;transform:scaleX(0.9750);-webkit-text-stroke:0.2px #222;">Criteria range:</span>
<span class="t" style="left:438.86px;top:370.83px;font-size:9px;line-height:9px;color:#222;transform:scaleX(0.9696);-webkit-text-stroke:0.2px #222;">Copy to:</span>
<div style="left:502px;top:332px;width:86px;height:15px;background:#ffffff;box-shadow:inset 0 0 0 1px #c9c9c9;"></div>
<div style="left:587.5px;top:332px;width:16px;height:15px;background:#dfe4ec;box-shadow:inset 0 0 0 1px #a8a8a8;"></div>
<svg style="left:589.5px;top:334.5px;" width="12" height="10" viewBox="0 0 12 10"><path d="M1.5 1.5h3M6 1.5h5M1.5 8.5h3M6 8.5h5" stroke="#4a5670" stroke-width="1.3"/><path d="M1.5 5h2M9 5h2" stroke="#9aa4b8" stroke-width="1"/><circle cx="6.3" cy="5.2" r="2.6" fill="#d03a34"/></svg>
<div style="left:502px;top:350px;width:86px;height:15px;background:#ffffff;box-shadow:inset 0 0 0 1px #c9c9c9;"></div>
<div style="left:587.5px;top:350px;width:16px;height:15px;background:#dfe4ec;box-shadow:inset 0 0 0 1px #a8a8a8;"></div>
<svg style="left:589.5px;top:352.5px;" width="12" height="10" viewBox="0 0 12 10"><path d="M1.5 1.5h3M6 1.5h5M1.5 8.5h3M6 8.5h5" stroke="#4a5670" stroke-width="1.3"/><path d="M1.5 5h2M9 5h2" stroke="#9aa4b8" stroke-width="1"/><circle cx="6.3" cy="5.2" r="2.6" fill="#d03a34"/></svg>
<div style="left:502px;top:367.5px;width:86px;height:15px;background:#ffffff;box-shadow:inset 0 0 0 1px #c9c9c9;"></div>
<div style="left:587.5px;top:367.5px;width:16px;height:15px;background:#dfe4ec;box-shadow:inset 0 0 0 1px #a8a8a8;"></div>
<svg style="left:589.5px;top:370.0px;" width="12" height="10" viewBox="0 0 12 10"><path d="M1.5 1.5h3M6 1.5h5M1.5 8.5h3M6 8.5h5" stroke="#4a5670" stroke-width="1.3"/><path d="M1.5 5h2M9 5h2" stroke="#9aa4b8" stroke-width="1"/><circle cx="6.3" cy="5.2" r="2.6" fill="#d03a34"/></svg>
<span class="t" style="left:505.06px;top:336.23px;font-size:9px;line-height:9px;color:#222;transform:scaleX(0.9193);-webkit-text-stroke:0.2px #222;">$A$1:$D$7</span>
<span class="t" style="left:505.06px;top:371.03px;font-size:9px;line-height:9px;color:#222;transform:scaleX(0.8731);-webkit-text-stroke:0.2px #222;">Sheet2!$F$1</span>
<div style="left:439px;top:392px;width:10.5px;height:10.5px;background:#ffffff;box-shadow:inset 0 0 0 1px #555;"></div>
<svg style="left:440px;top:393px;" width="9" height="9" viewBox="0 0 9 9"><path d="M1.5 4.5l2.2 2.5L7.8 1.8" stroke="#222" stroke-width="1.1" fill="none"/></svg>
<div style="left:452px;top:391px;width:82px;height:12.5px;border:1px dotted #555"></div>
<span class="t" style="left:452.46px;top:393.43px;font-size:9px;line-height:9px;color:#222;transform:scaleX(0.9870);-webkit-text-stroke:0.2px #222;">Unique records only</span>
<div style="left:460px;top:309.6px;width:5.2px;height:0.9px;background:#444;"></div>
<div style="left:465px;top:324.3px;width:5.2px;height:0.9px;background:#444;"></div>
<div style="left:439.5px;top:343.6px;width:4.6px;height:0.9px;background:#444;"></div>
<div style="left:439.5px;top:361.4px;width:5.6px;height:0.9px;background:#444;"></div>
<div style="left:462.5px;top:379.2px;width:3.2px;height:0.9px;background:#444;"></div>
<div style="left:477px;top:401.8px;width:3.5px;height:0.9px;background:#444;"></div>
<div style="left:482px;top:412.5px;width:56.5px;height:16.5px;background:#e1e1e1;border:1.5px solid #2f7fc6"></div>
<span class="t" style="left:504.40px;top:416.83px;font-size:9px;line-height:9px;color:#111;transform:scaleX(0.8921);-webkit-text-stroke:0.2px #111;">OK</span>
<div style="left:547px;top:412.5px;width:56.5px;height:17px;background:#e1e1e1;box-shadow:inset 0 0 0 1px #d0d0d0;"></div>
<span class="t" style="left:561.95px;top:416.83px;font-size:9px;line-height:9px;color:#111;transform:scaleX(0.9173);-webkit-text-stroke:0.2px #111;">Cancel</span>
<div style="left:430.5px;top:381px;width:111.5px;height:27px;border:3px solid #e0101b;border-radius:2px"></div>
<div style="left:479.5px;top:410px;width:66.5px;height:23.5px;border:3px solid #e0101b;border-radius:2px"></div>
<svg style="left:403.4px;top:376px;" width="20" height="30" viewBox="0 0 20 30"><path d="M10.5 2v25.5M3 27.5h15.5M10.5 2.5L3.5 8" stroke="#e0101b" stroke-width="2.7" fill="none"/></svg>
<svg style="left:451px;top:410px;" width="22" height="30" viewBox="0 0 22 30"><path d="M3.3 6C4.5 2.8 7.5 1.6 10.5 1.6C14.5 1.6 17.6 4.2 17.6 8.6C17.6 13 13.5 16.8 9.5 20.6C6.8 23.2 4.5 25.4 3 27H19" stroke="#e0101b" stroke-width="2.6" fill="none"/></svg>
<div style="left:1px;top:45px;width:1px;height:405px;background:#acacac;"></div>
<div style="left:16px;top:48px;width:24px;height:22px;background:#ffffff;box-shadow:inset 0 0 0 1px #d9d9d9;"></div>
<svg style="left:23px;top:53px;" width="14" height="13" viewBox="0 0 14 13"><path d="M1.5 0.5h5.5l2.5 2.5v9h-8z" fill="#fff" stroke="#6a6a6a"/><path d="M3 4.5h2.5M3 6.5h2.5M3 8.5h2.5M3 10.5h2.5" stroke="#8a8a8a" stroke-width="0.7"/><path d="M6.5 5.5h5.5v6.5h-5.5z" fill="#f2d08a" stroke="#d8a848" stroke-width="0.8"/><path d="M6.5 8.5h5.5" stroke="#d8a848" stroke-width="0.7"/></svg>
<svg style="left:62px;top:49px;" width="28" height="26" viewBox="0 0 28 26"><path d="M8 0.5L2 9h3.5L3 14.5 9.5 6H6z" fill="#f5c65a"/><ellipse cx="14" cy="5" rx="6.5" ry="2.2" fill="#6e6e6e"/><path d="M7.5 5v14c0 1.3 2.9 2.2 6.5 2.2s6.5-.9 6.5-2.2V5" fill="#6e6e6e"/><ellipse cx="14" cy="5" rx="5" ry="1.2" fill="#8a8a8a"/><rect x="10.5" y="13.5" width="16" height="11" fill="#fff" stroke="#7a7a7a"/><rect x="10.5" y="13.5" width="16" height="2.5" fill="#4a7ab4"/><path d="M10.5 19.5h16M15.8 16v8.5M21.2 16v8.5" stroke="#9a9a9a"/></svg>
<svg style="left:95px;top:49px;" width="13" height="12" viewBox="0 0 13 12"><rect x="0.5" y="0.5" width="12" height="11" fill="#fff" stroke="#7a7a7a"/><rect x="0.5" y="0.5" width="12" height="2.2" fill="#4a7ab4"/><path d="M9.5 3v8.5M1 8h8.5" stroke="#b5b5b5"/></svg>
<svg style="left:95px;top:67px;" width="13" height="13" viewBox="0 0 13 13"><rect x="0.5" y="0.5" width="12" height="12" fill="#fff" stroke="#7a7a7a"/><rect x="0.5" y="0.5" width="12" height="2.5" fill="#4a7ab4"/><path d="M1 6h11.5M1 9h11.5M4.5 3v9.5M8.5 3v9.5" stroke="#b0b0b0"/></svg>
<svg style="left:95px;top:84px;" width="14" height="13" viewBox="0 0 14 13"><path d="M1.5 0.5h5l2.5 2.5v4" fill="none" stroke="#6a6a6a"/><path d="M1.5 0.5v11h4" fill="none" stroke="#6a6a6a"/><circle cx="9.5" cy="8.5" r="3.6" fill="#fff" stroke="#6a7a90"/><path d="M9.5 6.5v2.2l1.5 1" stroke="#6a7a90" fill="none"/></svg>
<svg style="left:190px;top:50px;" width="26" height="24" viewBox="0 0 26 24"><path d="M1.5 2.5v17" stroke="#c6c6c6"/><path d="M3.5 1.5v18" stroke="#c6c6c6"/><path d="M5.5 0.5h9l4 4v15h-13z" fill="#f4f4f4" stroke="#c6c6c6"/><circle cx="18" cy="18" r="4.5" fill="none" stroke="#bdbdbd" stroke-width="1.8"/><path d="M15 13l3.5 1-1.5 3M21 23l-3.5-1 1.5-3" fill="none" stroke="#bdbdbd" stroke-width="1.2"/></svg>
<svg style="left:220px;top:49px;" width="14" height="12" viewBox="0 0 14 12"><rect x="0.5" y="0.5" width="13" height="9.5" fill="#e9f0f8" stroke="#555" stroke-width="1.2"/><path d="M1 10.5h12" stroke="#888"/><path d="M7 3l2 2-2 2-2-2z" fill="#4a6fa0"/></svg>
<svg style="left:221px;top:67px;" width="12" height="13" viewBox="0 0 12 13"><rect x="0.5" y="0.5" width="11" height="11.5" fill="#f7f7f7" stroke="#c6c6c6"/><path d="M0.5 2.5h11M3 5.5h1.5M6 5.5h4M3 8.5h1.5M6 8.5h4" stroke="#c6c6c6"/></svg>
<svg style="left:222px;top:85px;" width="12" height="12" viewBox="0 0 12 12"><path d="M0.5 0.5h6l3 3v4" fill="none" stroke="#c6c6c6"/><path d="M0.5 0.5v10.5h3" fill="none" stroke="#c6c6c6"/><rect x="4" y="8" width="7" height="3.5" rx="1.5" fill="none" stroke="#c6c6c6"/></svg>
<span class="t" style="left:303.11px;top:55.75px;font-size:6.5px;line-height:6.5px;color:#4a7ab4;font-weight:bold;transform:scaleX(1.0225);">A</span>
<span class="t" style="left:303.11px;top:61.05px;font-size:6.5px;line-height:6.5px;color:#7b4f8e;font-weight:bold;transform:scaleX(1.2089);">Z</span>
<svg style="left:309px;top:55px;" width="6" height="12" viewBox="0 0 6 12"><path d="M3 0.5v10M0.8 8l2.2 2.7L5.2 8" stroke="#707070" fill="none" stroke-width="1.1"/></svg>
<span class="t" style="left:303.11px;top:79.75px;font-size:6.5px;line-height:6.5px;color:#7b4f8e;font-weight:bold;transform:scaleX(1.2089);">Z</span>
<span class="t" style="left:303.11px;top:85.05px;font-size:6.5px;line-height:6.5px;color:#4a7ab4;font-weight:bold;transform:scaleX(1.0225);">A</span>
<svg style="left:309px;top:79px;" width="6" height="12" viewBox="0 0 6 12"><path d="M3 0.5v10M0.8 8l2.2 2.7L5.2 8" stroke="#707070" fill="none" stroke-width="1.1"/></svg>
<svg style="left:321px;top:51px;" width="24" height="20" viewBox="0 0 24 20"><rect x="0.5" y="0.5" width="22.5" height="19" fill="#fff" stroke="#8a8a8a"/><rect x="0.5" y="0.5" width="22.5" height="3" fill="#4a7ab4"/><path d="M11.75 3.5v16" stroke="#8a8a8a"/></svg>
<span class="t" style="left:323.91px;top:56.15px;font-size:6.5px;line-height:6.5px;color:#7b4f8e;font-weight:bold;transform:scaleX(1.3096);">Z</span>
<span class="t" style="left:323.91px;top:63.75px;font-size:6.5px;line-height:6.5px;color:#4a7ab4;font-weight:bold;transform:scaleX(1.1077);">A</span>
<span class="t" style="left:335.41px;top:56.15px;font-size:6.5px;line-height:6.5px;color:#4a7ab4;font-weight:bold;transform:scaleX(1.1077);">A</span>
<span class="t" style="left:335.41px;top:63.75px;font-size:6.5px;line-height:6.5px;color:#7b4f8e;font-weight:bold;transform:scaleX(1.3096);">Z</span>
<svg style="left:361px;top:50px;" width="23" height="23" viewBox="0 0 23 23"><path d="M0.5 1h22L14 11v11h-5V11z" fill="#737373"/><path d="M4 2.5h15L12.5 10.5v10h-2v-10z" fill="#8c8c8c"/></svg>
<svg style="left:390px;top:49px;" width="14" height="12" viewBox="0 0 14 12"><path d="M0.5 0.5h12L8 5.5v5H5v-5z" fill="#bdbdbd"/><path d="M8.5 7l4 4M12.5 7l-4 4" stroke="#b0b0b0" stroke-width="1.1"/></svg>
<svg style="left:390px;top:67px;" width="14" height="13" viewBox="0 0 14 13"><path d="M0.5 0.5h12L8 5.5v5H5v-5z" fill="#bdbdbd"/><circle cx="10" cy="9.5" r="2.8" fill="none" stroke="#b0b0b0" stroke-width="1.1"/></svg>
<svg style="left:390px;top:85px;" width="15" height="13" viewBox="0 0 15 13"><path d="M0.5 0.5h11L7.5 5v6H4.5V5z" fill="#5e5e5e"/><path d="M6 11.5l6.5-6.5 1.5 1.5-6.5 6.5H6z" fill="#4a7ab4"/></svg>
<svg style="left:466px;top:50px;" width="27" height="21" viewBox="0 0 27 21"><rect x="1.5" y="7.5" width="12" height="12" fill="#fff" stroke="#7a7a7a" stroke-width="1.2"/><path d="M4 10.5h7M4 12.5h7M4 14.5h7M4 16.5h7" stroke="#6f7f90" stroke-width="0.9"/><rect x="15.5" y="10.5" width="10" height="8" fill="#fff" stroke="#7a7a7a" stroke-width="1.2"/><path d="M15.5 12.5h10M20.5 12.5v6" stroke="#7a7a7a"/><path d="M10 5.5c2-4 8-5 11 0" fill="none" stroke="#4a7ab4" stroke-width="1.6"/><path d="M18.5 5.5h4l-2 3z" fill="#4a7ab4"/></svg>
<svg style="left:502px;top:50px;" width="13" height="11" viewBox="0 0 13 11"><rect x="0.5" y="0.5" width="11" height="9" fill="#f7f7f7" stroke="#c6c6c6"/><path d="M2.5 3h6M2.5 5.5h4M2.5 8h6" stroke="#c6c6c6"/></svg>
<svg style="left:502px;top:67px;" width="14" height="13" viewBox="0 0 14 13"><rect x="0.5" y="0.5" width="4" height="12" fill="#5f6672"/><rect x="9.5" y="0.5" width="4" height="12" fill="#5f6672"/><rect x="1.3" y="4" width="2.4" height="2.5" fill="#e8c36a"/><rect x="10.3" y="7" width="2.4" height="2.5" fill="#e8c36a"/><path d="M5 6.5h4" stroke="#5f6672"/></svg>
<svg style="left:502px;top:84px;" width="14" height="14" viewBox="0 0 14 14"><rect x="0.5" y="3.5" width="9" height="3" fill="#fff" stroke="#7a7a7a"/><rect x="0.5" y="8.5" width="9" height="3" fill="#fff" stroke="#7a7a7a"/><path d="M8 3l2.2 2L13.5 0.5" stroke="#4aa04a" fill="none" stroke-width="1.1"/><circle cx="10" cy="10.5" r="2.4" fill="#e06a6a"/></svg>
<svg style="left:529px;top:50px;" width="14" height="11" viewBox="0 0 14 11"><rect x="0.5" y="0.5" width="4" height="10" fill="#fff" stroke="#7b4f8e"/><path d="M1 3.5h3M1 6.5h3" stroke="#7b4f8e"/><path d="M5 5.5h3" stroke="#7a7a7a"/><rect x="8.5" y="3" width="4.5" height="4.5" fill="#fff" stroke="#d05050"/></svg>
<svg style="left:529px;top:67px;" width="14" height="13" viewBox="0 0 14 13"><rect x="0.5" y="4.5" width="4" height="4" fill="none" stroke="#c6c6c6"/><rect x="8.5" y="0.5" width="4" height="4" fill="none" stroke="#c6c6c6"/><rect x="8.5" y="8.5" width="4" height="4" fill="none" stroke="#c6c6c6"/><path d="M4.5 6.5l4-4M4.5 6.5l4 4" stroke="#c6c6c6"/></svg>
<svg style="left:529px;top:84px;" width="14" height="13" viewBox="0 0 14 13"><ellipse cx="7" cy="2.5" rx="6.5" ry="2.2" fill="#7cc060"/><path d="M0.5 2.5v8c0 1.3 2.9 2.2 6.5 2.2s6.5-.9 6.5-2.2v-8" fill="#58a040"/><path d="M3 5h8M3 8h8M5.5 4v7M8.5 4v7" stroke="#b8e0a8" stroke-width="0.8"/></svg>
<svg style="left:561px;top:51px;" width="25" height="24" viewBox="0 0 25 24"><rect x="1.5" y="0.5" width="21" height="20" fill="#fff" stroke="#9a9a9a"/><path d="M1.5 5.5h21M1.5 10.5h21M1.5 15.5h21M6.5 0.5v20M11.5 0.5v20M16.5 0.5v20" stroke="#c4c4c4"/><rect x="6.5" y="5.5" width="5" height="5" fill="#f3dcc0"/><rect x="6.5" y="10.5" width="5" height="5" fill="#f3dcc0"/><path d="M14.5 10c0-2.5 2-4 4.2-4s4.2 1.5 4.2 3.8c0 2.5-3.2 3-3.2 5.5v1" fill="none" stroke="#4a7ab4" stroke-width="2.6"/><circle cx="19.6" cy="21" r="1.6" fill="#4a7ab4"/></svg>
<svg style="left:601px;top:51px;" width="24" height="21" viewBox="0 0 24 21"><rect x="0.5" y="0.5" width="22" height="17" fill="#fff" stroke="#9a9a9a"/><path d="M0.5 5h22M0.5 9.5h22M0.5 14h22M6 0.5v17M11.5 0.5v17M17 0.5v17" stroke="#c4c4c4"/><path d="M2 18.5h4M7 18.5h4M12 18.5h4" stroke="#9a9a9a"/><path d="M1.5 15l5-4 3 2 4-4" fill="none" stroke="#4a7ab4" stroke-width="1.6"/><path d="M13.5 9l3 1.5 4.5-7" fill="none" stroke="#d05a3a" stroke-width="1.6"/><path d="M18 2.5h4v4z" fill="#d05a3a"/></svg>
<svg style="left:641px;top:50px;" width="14" height="12" viewBox="0 0 14 12"><rect x="5.5" y="0.5" width="7" height="10" fill="#f2f2f2" stroke="#8a8a8a"/><path d="M5.5 3.8h7M5.5 7.2h7M9 0.5v10" stroke="#9a9a9a"/><path d="M4.5 1.5h-2.5v8h2.5" stroke="#8a8a8a" fill="none"/><circle cx="2.5" cy="5.5" r="2" fill="#fff" stroke="#707070"/><path d="M1.5 5.5h2M2.5 4.5v2" stroke="#707070"/></svg>
<svg style="left:641px;top:67px;" width="14" height="12" viewBox="0 0 14 12"><rect x="5.5" y="0.5" width="7" height="10" fill="#f2f2f2" stroke="#8a8a8a"/><path d="M5.5 3.8h7M5.5 7.2h7M9 0.5v10" stroke="#9a9a9a"/><path d="M4.5 1.5h-2.5v8h2.5" stroke="#8a8a8a" fill="none"/><circle cx="2.5" cy="5.5" r="2.3" fill="#f2a08a" stroke="#d05a3a"/><path d="M1.2 6.8l2.6-2.6" stroke="#fff"/></svg>
<svg style="left:641px;top:85px;" width="14" height="13" viewBox="0 0 14 13"><rect x="5.5" y="0.5" width="7" height="12" fill="#f2f2f2" stroke="#8a8a8a"/><path d="M5.5 4.5h7M5.5 8.5h7M9 0.5v12" stroke="#9a9a9a"/><rect x="0.5" y="1.5" width="4" height="4" fill="#fff" stroke="#8a8a8a"/><rect x="0.5" y="7.5" width="4" height="4" fill="#fff" stroke="#8a8a8a"/></svg>
<svg style="left:710px;top:50px;" width="13" height="12" viewBox="0 0 13 12"><path d="M1 3.5h5M3.5 1v5" stroke="#bdbdbd" stroke-width="1.2"/><path d="M8 0.5h4.5M8 4h4.5M8 7.5h4.5M8 11h4.5M12.5 0.5v10.5" stroke="#c8c8c8"/></svg>
<svg style="left:710px;top:67px;" width="13" height="12" viewBox="0 0 13 12"><path d="M1 3.5h5" stroke="#bdbdbd" stroke-width="1.2"/><path d="M8 0.5h4.5M8 4h4.5M8 7.5h4.5M8 11h4.5M12.5 0.5v10.5" stroke="#c8c8c8"/></svg>
<svg style="left:719px;top:107px;" width="6" height="6" viewBox="0 0 6 6"><path d="M0.5 0.5h5v5" stroke="#8a8a8a" fill="none"/><path d="M1.5 1.5l3.5 3.5M3 5h2V3" stroke="#8a8a8a" fill="none"/></svg>
<svg style="left:783px;top:107px;" width="8" height="5" viewBox="0 0 8 5"><path d="M0.8 4.2L4 1l3.2 3.2" stroke="#444" stroke-width="1.3" fill="none"/></svg>
</body></html>
